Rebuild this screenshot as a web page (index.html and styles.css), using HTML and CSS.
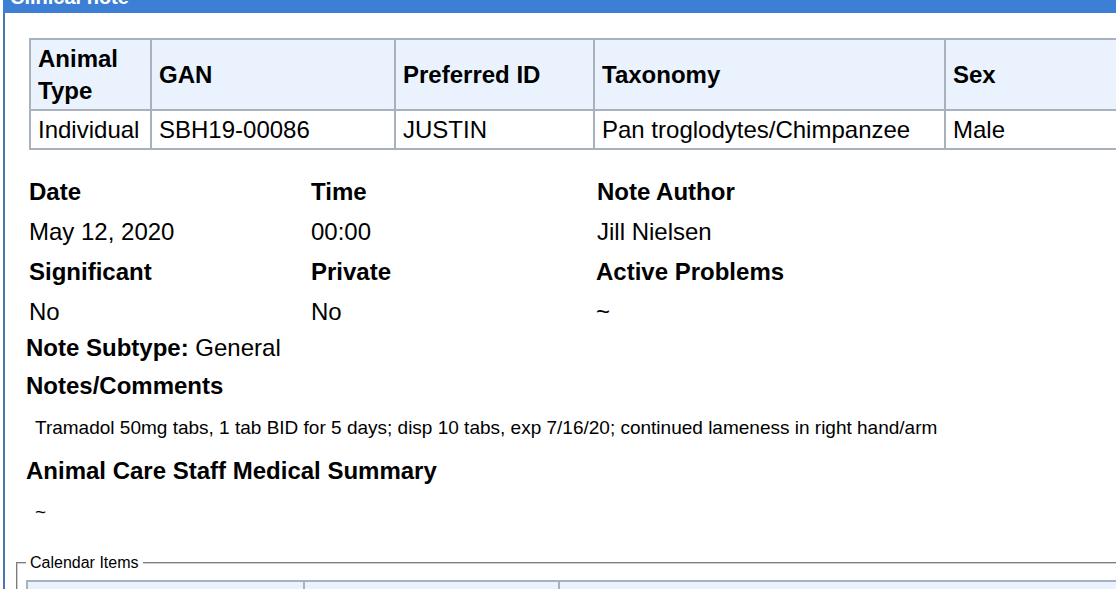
FILE: index.html
```html
<!DOCTYPE html>
<html lang="en">
<head>
<meta charset="utf-8">
<title>Clinical note</title>
<link rel="stylesheet" href="styles.css">
</head>
<body>
<div class="panel">
  <div class="panel-header"><span class="panel-title">Clinical note</span></div>
  <div class="panel-body">
    <table class="animal-table">
      <colgroup>
        <col class="c1"><col class="c2"><col class="c3"><col class="c4"><col class="c5">
      </colgroup>
      <thead>
        <tr><th>Animal<br>Type</th><th>GAN</th><th>Preferred ID</th><th>Taxonomy</th><th>Sex</th></tr>
      </thead>
      <tbody>
        <tr><td>Individual</td><td>SBH19-00086</td><td>JUSTIN</td><td>Pan troglodytes/Chimpanzee</td><td>Male</td></tr>
      </tbody>
    </table>

    <div class="details">
      <div class="field"><div class="label">Date</div><div class="value">May 12, 2020</div></div>
      <div class="field"><div class="label">Time</div><div class="value">00:00</div></div>
      <div class="field"><div class="label">Note Author</div><div class="value">Jill Nielsen</div></div>
      <div class="field"><div class="label">Significant</div><div class="value">No</div></div>
      <div class="field"><div class="label">Private</div><div class="value">No</div></div>
      <div class="field field-shift"><div class="label">Active Problems</div><div class="value">~</div></div>
    </div>

    <div class="subtype"><b>Note Subtype:</b> General</div>
    <h4 class="section-title notes-title">Notes/Comments</h4>
    <p class="note-text">Tramadol 50mg tabs, 1 tab BID for 5 days; disp 10 tabs, exp 7/16/20; continued lameness in right hand/arm</p>
    <h4 class="section-title summary-title">Animal Care Staff Medical Summary</h4>
    <p class="note-text tilde">~</p>

    <fieldset class="calendar">
      <legend>Calendar Items</legend>
      <table class="calendar-table">
        <colgroup><col class="k1"><col class="k2"><col class="k3"></colgroup>
        <thead><tr><th>&nbsp;</th><th>&nbsp;</th><th>&nbsp;</th></tr></thead>
      </table>
    </fieldset>
  </div>
</div>
</body>
</html>
```

FILE: styles.css
```css
html, body {
  margin: 0;
  padding: 0;
  background: #ffffff;
  overflow: hidden;
}

body {
  font-family: "Liberation Sans", Arial, sans-serif;
  font-size: 24px;
  line-height: 32px;
  color: #000000;
}

.panel {
  margin-left: 3px;
  width: 1300px;
  border-left: 2px solid #4a78ad;
}

.panel-header {
  height: 13px;
  overflow: hidden;
  background: #3d7fd4;
  margin-left: -2px;
}

.panel-title {
  display: block;
  margin-top: -13px;
  padding-left: 7px;
  font-size: 20px;
  line-height: 20px;
  font-weight: bold;
  color: #ffffff;
}

.panel-body {
  padding: 25px 0 0 11px;
}

/* animal table */
.animal-table {
  margin-left: 13px;
  width: 1150px;
  table-layout: fixed;
  border-collapse: collapse;
  border: 2px solid #a9b2bc;
}

.animal-table .c1 { width: 121px; }
.animal-table .c2 { width: 244px; }
.animal-table .c3 { width: 199px; }
.animal-table .c4 { width: 351px; }

.animal-table th,
.animal-table td {
  border: 2px solid #a9b2bc;
  padding: 2.5px 7px;
  text-align: left;
  vertical-align: middle;
  white-space: nowrap;
  overflow: hidden;
}

.animal-table th {
  background: #eaf3fd;
  font-weight: bold;
}

/* details grid */
.details {
  margin: 22px 0 0 13px;
  display: grid;
  grid-template-columns: 282px 286px 300px;
}

.field .label,
.field .value {
  line-height: 40px;
}

.field .label {
  font-weight: bold;
}

.field-shift {
  margin-left: -1px;
}

.subtype {
  margin-left: 10px;
  line-height: 32px;
}

.section-title {
  margin: 0 0 0 10px;
  font-size: 24px;
  line-height: 32px;
  font-weight: bold;
}

.notes-title {
  margin-top: 6px;
}

.summary-title {
  margin-top: 15px;
}

.note-text {
  margin: 14px 0 0 19px;
  font-size: 19px;
  line-height: 24px;
}

.tilde {
  margin-top: 13px;
}

/* calendar fieldset */
.calendar {
  margin: 30px 0 0 0;
  padding: 8px 8px 0 8px;
  width: 1200px;
  border: 2px groove #d0d0d0;
  border-bottom: none;
}

.calendar legend {
  padding: 0 4px;
  font-size: 16px;
  line-height: 18px;
}

.calendar-table {
  width: 1180px;
  table-layout: fixed;
  border-collapse: collapse;
  border: 2px solid #a9b2bc;
}

.calendar-table .k1 { width: 277px; }
.calendar-table .k2 { width: 255px; }

.calendar-table th {
  height: 30px;
  background: #eaf3fd;
  border: 2px solid #a9b2bc;
}
```
